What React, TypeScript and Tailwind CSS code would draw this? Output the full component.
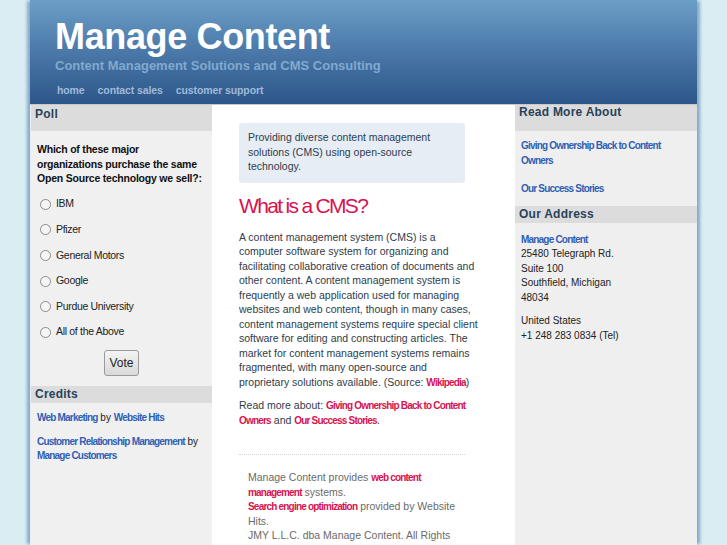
const linkBlue = "font-bold tracking-[-0.08em] text-[#2f5fb3]";
const linkRed = "text-[10px] leading-none font-bold tracking-[-0.08em] text-[#d8124f]";

const pollOptions = ["IBM", "Pfizer", "General Motors", "Google", "Purdue University", "All of the Above"];

// wrapped as on the original page
const cmsLines = [
    "A content management system (CMS) is a",
    "computer software system for organizing and",
    "facilitating collaborative creation of documents and",
    "other content. A content management system is",
    "frequently a web application used for managing",
    "websites and web content, though in many cases,",
    "content management systems require special client",
    "software for editing and constructing articles. The",
    "market for content management systems remains",
    "fragmented, with many open-source and",
];

function SideHeader({ children, tall }: { children: React.ReactNode; tall?: boolean }) {
    return (
        <div
            className={`bg-[#dcdcdc] px-[4px] text-[12px] font-bold tracking-[0.02em] text-[#2a4259] ${
                tall ? "h-[26px]" : "h-[17px] leading-[17px]"
            }`}
        >
            {children}
        </div>
    );
}

function LeftColumn() {
    return (
        <div className="w-[182px] shrink-0 bg-[#f0f0f0] border-l border-[#e8eef3]">
            <SideHeader tall>Poll</SideHeader>
            <p className="mt-[11px] px-[6px] text-[10.5px] font-bold leading-[14.5px] tracking-[-0.02em] text-[#111]">
                Which of these major organizations purchase the same Open Source technology we sell?:
            </p>
            <div className="mt-[6px] flex flex-col">
                {pollOptions.map((o) => (
                    <label key={o} className="flex h-[25.6px] items-center gap-[5px] pl-[9px] text-[10.5px] text-[#222]">
                        <span className="h-[11px] w-[11px] rounded-full border border-[#8a8a8a] bg-[#f6f6f6]" />
                        <span className="tracking-[-0.03em]">{o}</span>
                    </label>
                ))}
            </div>
            <div className="mt-[5px] flex justify-center">
                <button className="h-[26px] w-[35px] rounded-[3px] border border-[#9a9a9a] bg-gradient-to-b from-[#f4f4f4] to-[#d9d9d9] text-[12px] text-[#222]">
                    Vote
                </button>
            </div>
            <div className="mt-[10px]">
                <SideHeader>Credits</SideHeader>
            </div>
            <div className="px-[6px] pt-[8px] text-[10px] leading-[14.5px] text-[#222]">
                <p>
                    <span className={linkBlue}>Web Marketing</span> by <span className={linkBlue}>Website Hits</span>
                </p>
                <p className="mt-[9px]">
                    <span className={linkBlue}>Customer Relationship Management</span> by{" "}
                    <span className={linkBlue}>Manage Customers</span>
                </p>
            </div>
        </div>
    );
}

function CenterColumn() {
    return (
        <div className="w-[303px] shrink-0 bg-white pl-[27px] pr-[50px] pt-[18px] text-[10.5px] leading-[14.5px] text-[#2e3c4c]">
            <div className="rounded-[3px] bg-[#e6edf5] px-[9px] pb-[9px] pt-[7px]">
                Providing diverse content management solutions (CMS) using open-source technology.
            </div>
            <h2 className="mt-[9px] text-[21px] leading-[28px] tracking-[-0.08em] text-[#d8124f]">What is a CMS?</h2>
            <p className="mt-[10px] whitespace-nowrap">
                {cmsLines.map((l) => (
                    <span key={l} className="block">
                        {l}
                    </span>
                ))}
                <span className="block">
                    proprietary solutions available. (Source: <span className={linkRed}>Wikipedia</span>)
                </span>
            </p>
            <p className="mr-[-8px] mt-[9px]">
                Read more about: <span className={linkRed}>Giving Ownership Back to Content Owners</span> and{" "}
                <span className={linkRed}>Our Success Stories</span>.
            </p>
            <div className="mt-[27px] border-t border-dotted border-[#d6d6d6]" />
            <div className="px-[9px] pt-[15px] text-[#6a6a6a]">
                <p>
                    Manage Content provides <span className={linkRed}>web content management</span> systems.
                </p>
                <p>
                    <span className={linkRed}>Search engine optimization</span> provided by Website Hits.
                </p>
                <p>JMY L.L.C. dba Manage Content. All Rights Reserved.</p>
            </div>
        </div>
    );
}

function RightColumn() {
    return (
        <div className="w-[182px] shrink-0 bg-[#efefef] text-[10px] leading-[14.5px] text-[#222]">
            <SideHeader tall>Read More About</SideHeader>
            <div className="px-[6px] pt-[8px]">
                <p className={linkBlue}>Giving Ownership Back to Content Owners</p>
                <p className={`mt-[14px] ${linkBlue}`}>Our Success Stories</p>
            </div>
            <div className="mt-[9px]">
                <SideHeader>Our Address</SideHeader>
            </div>
            <div className="px-[6px] pt-[10px]">
                <p className={linkBlue}>Manage Content</p>
                <p>25480 Telegraph Rd.</p>
                <p>Suite 100</p>
                <p>Southfield, Michigan</p>
                <p>48034</p>
                <p className="mt-[9px]">United States</p>
                <p>+1 248 283 0834 (Tel)</p>
            </div>
        </div>
    );
}

export default function App() {
    return (
        <div
            className="h-[545px] overflow-hidden bg-[#d9edf2]"
            style={{ fontFamily: '"Liberation Sans", Arial, sans-serif' }}
        >
            <div className="mx-auto flex h-full w-[667px] flex-col shadow-[-4px_0_3px_-1px_#86a9cb,4px_0_3px_-1px_#86a9cb]">
                <header className="h-[104px] shrink-0 bg-gradient-to-b from-[#6c9fc7] via-[#4a78a8] to-[#2d5689] pl-[25px] pt-[16px]">
                    <h1 className="text-[36px] font-bold leading-[42px] tracking-[-0.01em] text-white">Manage Content</h1>
                    <p className="text-[13px] font-bold leading-[16px] text-[#82a9cf]">
                        Content Management Solutions and CMS Consulting
                    </p>
                    <nav className="mt-[9px] flex gap-[13px] pl-[2px] text-[10.5px] font-bold tracking-[-0.01em] text-[#9fbad8]">
                        <span>home</span>
                        <span>contact sales</span>
                        <span>customer support</span>
                    </nav>
                </header>
                <div className="flex flex-1 border-t border-[#c8c8c8]">
                    <LeftColumn />
                    <CenterColumn />
                    <RightColumn />
                </div>
            </div>
        </div>
    );
}
